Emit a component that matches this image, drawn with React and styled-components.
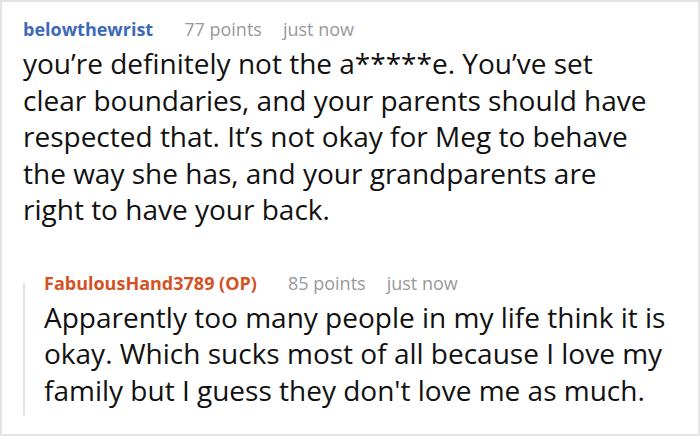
import React from "react";
import styled, { createGlobalStyle } from "styled-components";

const Global = createGlobalStyle`
  html, body {
    margin: 0;
    padding: 0;
    background: #fff;
  }
  body {
    font-family: "Open Sans", "Noto Sans", sans-serif;
  }
`;

const Frame = styled.div`
  box-sizing: border-box;
  width: 700px;
  height: 436px;
  border: 2px solid #e4e4e4;
  padding: 13px 38px 0 21px;
  overflow: hidden;
`;

const Meta = styled.div`
  display: flex;
  align-items: baseline;
  gap: 21px;
  font-size: 18px;
  line-height: 28px;
  white-space: nowrap;
`;

const User = styled.span`
  font-weight: 700;
  color: ${(p) => (p.$op ? "#d4521f" : "#3c6ab8")};
  margin-right: 10px;
`;

const Faint = styled.span`
  color: #999;
`;

const Body = styled.p`
  margin: 2px 0 0;
  font-size: 28px;
  line-height: 36.5px;
  color: #111;
`;

const Reply = styled.div`
  display: flex;
  margin: 41px -10px 0 0;
`;

const Rail = styled.div`
  flex: none;
  width: 2px;
  margin: 14px 19px 0 0;
  background: #e2e2e2;
`;

const Thread = styled.div`
  flex: 1;
  padding-bottom: 7px;
`;

const Comment = ({ user, op, points, children }) => (
  <>
    <Meta>
      <User $op={op}>{user}</User>
      <Faint>{points} points</Faint>
      <Faint>just now</Faint>
    </Meta>
    <Body>{children}</Body>
  </>
);

export default function App() {
  return (
    <>
      <Global />
      <Frame>
        <Comment user="belowthewrist" points={77}>
          you’re definitely not the a*****e. You’ve set clear boundaries, and
          your parents should have respected that. It’s not okay for Meg to
          behave the way she has, and your grandparents are right to have your
          back.
        </Comment>
        <Reply>
          <Rail />
          <Thread>
            <Comment user="FabulousHand3789 (OP)" op points={85}>
              Apparently too many people in my life think it is okay. Which
              sucks most of all because I love my family but I guess they
              don't love me as much.
            </Comment>
          </Thread>
        </Reply>
      </Frame>
    </>
  );
}
